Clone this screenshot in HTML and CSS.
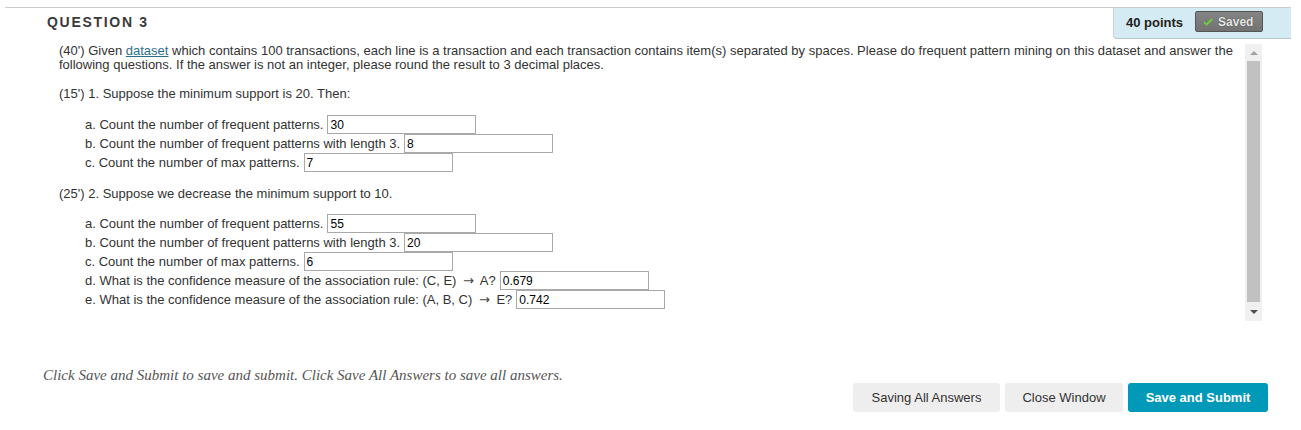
FILE: index.html
```html
<!DOCTYPE html>
<html>
<head>
<meta charset="utf-8">
<link rel="stylesheet" href="styles.css">
</head>
<body>
<div class="question">
  <div class="q-header">
    <h2 class="q-title">QUESTION 3</h2>
    <div class="points">
      <span class="points-text">40 points</span>
      <span class="saved">
        <svg class="check" width="10" height="8" viewBox="0 0 10 8"><path d="M1 4.2 L3.6 6.6 L9 1.2" fill="none" stroke="#6fd33a" stroke-width="1.8"/></svg>
        Saved
      </span>
    </div>
  </div>
  <div class="q-body">
    <div class="q-content">
      <p class="q-text">(40') Given <a href="#" class="link">dataset</a> which contains 100 transactions, each line is a transaction and each transaction contains item(s) separated by spaces. Please do frequent pattern mining on this dataset and answer the following questions. If the answer is not an integer, please round the result to 3 decimal places.</p>
      <p class="q-part">(15') 1. Suppose the minimum support is 20. Then:</p>
      <div class="items">
        <div class="item"><span>a. Count the number of frequent patterns.</span><input class="ans" type="text" value="30"></div>
        <div class="item"><span>b. Count the number of frequent patterns with length 3.</span><input class="ans" type="text" value="8"></div>
        <div class="item"><span>c. Count the number of max patterns.</span><input class="ans" type="text" value="7"></div>
      </div>
      <p class="q-part">(25') 2. Suppose we decrease the minimum support to 10.</p>
      <div class="items">
        <div class="item"><span>a. Count the number of frequent patterns.</span><input class="ans" type="text" value="55"></div>
        <div class="item"><span>b. Count the number of frequent patterns with length 3.</span><input class="ans" type="text" value="20"></div>
        <div class="item"><span>c. Count the number of max patterns.</span><input class="ans" type="text" value="6"></div>
        <div class="item"><span>d. What is the confidence measure of the association rule: (C, E) <span class="arrow">→</span> A?</span><input class="ans" type="text" value="0.679"></div>
        <div class="item"><span>e. What is the confidence measure of the association rule: (A, B, C) <span class="arrow">→</span> E?</span><input class="ans" type="text" value="0.742"></div>
      </div>
    </div>
    <div class="scrollbar">
      <div class="sb-btn"><span class="arrow-up"></span></div>
      <div class="sb-thumb"></div>
      <div class="sb-btn sb-down"><span class="arrow-down"></span></div>
    </div>
  </div>
</div>
<div class="footer">
  <p class="footer-note">Click Save and Submit to save and submit. Click Save All Answers to save all answers.</p>
  <div class="buttons">
    <button class="btn btn-saving">Saving All Answers</button>
    <button class="btn btn-close">Close Window</button>
    <button class="btn btn-primary">Save and Submit</button>
  </div>
</div>
</body>
</html>
```
FILE: styles.css
```css
* { box-sizing: border-box; }
html, body { margin: 0; padding: 0; background: #fff; }
body {
  padding-top: 7px;
  font-family: "Liberation Sans", Arial, sans-serif;
  color: #333;
  width: 1301px;
  height: 430px;
  overflow: hidden;
}
.question {
  margin: 0 10px 0 5px;
  border-top: 1px solid #cccccc;
}
.q-header {
  display: flex;
  justify-content: space-between;
  align-items: flex-start;
  height: 31px;
}
.q-title {
  margin: 0;
  padding: 6px 0 0 42px;
  font-size: 14px;
  line-height: 16px;
  font-weight: bold;
  letter-spacing: 1.7px;
  color: #3a3a3a;
}
.points {
  display: flex;
  align-items: center;
  height: 31px;
  width: 178px;
  padding-left: 12px;
  background: #d5ebf3;
  border-left: 1px solid #c3d3d9;
  border-bottom: 1px solid #b9c6cb;
  border-bottom-left-radius: 4px;
}
.points-text {
  font-size: 13px;
  font-weight: bold;
  color: #222;
  margin-right: 12px;
  margin-top: -2px;
}
.saved {
  display: flex;
  align-items: center;
  gap: 5px;
  width: 68px;
  height: 21px;
  margin-top: -3px;
  padding-left: 7px;
  background: linear-gradient(#858585, #727272);
  border: 1px solid #555;
  border-radius: 2px;
  font-size: 12px;
  font-weight: bold;
  color: #e6e6e6;
  text-shadow: 0 0 1px #333;
}
.check { display: block; }
.q-body {
  display: flex;
  margin: 5px 29px 0 54px;
  height: 277px;
}
.q-content {
  flex: 1;
  font-size: 13px;
  line-height: 14px;
  color: #333;
  overflow: hidden;
}
.q-text { margin: 0; }
.link { color: #2b6f8c; text-decoration: underline; }
.q-part { margin: 15px 0 14px 0; }
.q-part + .items + .q-part { margin-bottom: 13px; }
.items { margin-left: 26px; }
.item {
  display: flex;
  align-items: center;
  gap: 4px;
  height: 19px;
}
.arrow {
  font-family: "DejaVu Sans", sans-serif;
  font-size: 13px;
  line-height: 14px;
  margin: 0 3px;
  color: #444;
}
.ans {
  width: 149px;
  height: 19px;
  margin: 0;
  padding: 0 2px;
  border: 1px solid #a9a9a9;
  font-family: "Liberation Sans", Arial, sans-serif;
  font-size: 12px;
  color: #000;
  background: #fff;
  outline: none;
}
.scrollbar {
  width: 17px;
  display: flex;
  flex-direction: column;
  background: #f0f0f0;
}
.sb-btn {
  height: 17px;
  display: flex;
  align-items: center;
  justify-content: center;
}
.sb-down { height: 19px; }
.sb-thumb {
  flex: 1;
  margin: 0 2px;
  background: #c1c1c1;
}
.arrow-up {
  width: 0; height: 0;
  border-left: 4px solid transparent;
  border-right: 4px solid transparent;
  border-bottom: 4px solid #a3a3a3;
}
.arrow-down {
  width: 0; height: 0;
  border-left: 4px solid transparent;
  border-right: 4px solid transparent;
  border-top: 4px solid #505050;
}
.footer {
  padding: 0 33px 0 43px;
}
.footer-note {
  margin: 46px 0 0 0;
  font-family: "Liberation Serif", "Times New Roman", serif;
  font-style: italic;
  font-size: 15px;
  line-height: 16px;
  color: #555;
}
.buttons {
  display: flex;
  justify-content: flex-end;
  gap: 5px;
}
.btn {
  height: 29px;
  padding: 0;
  border: none;
  border-radius: 3px;
  background: #eeeeee;
  font-family: "Liberation Sans", Arial, sans-serif;
  font-size: 13px;
  color: #333;
  text-align: center;
}
.btn-saving { width: 147px; }
.btn-close { width: 118px; }
.btn-primary {
  width: 140px;
  background: #0199b8;
  color: #fff;
  font-weight: bold;
}
```
